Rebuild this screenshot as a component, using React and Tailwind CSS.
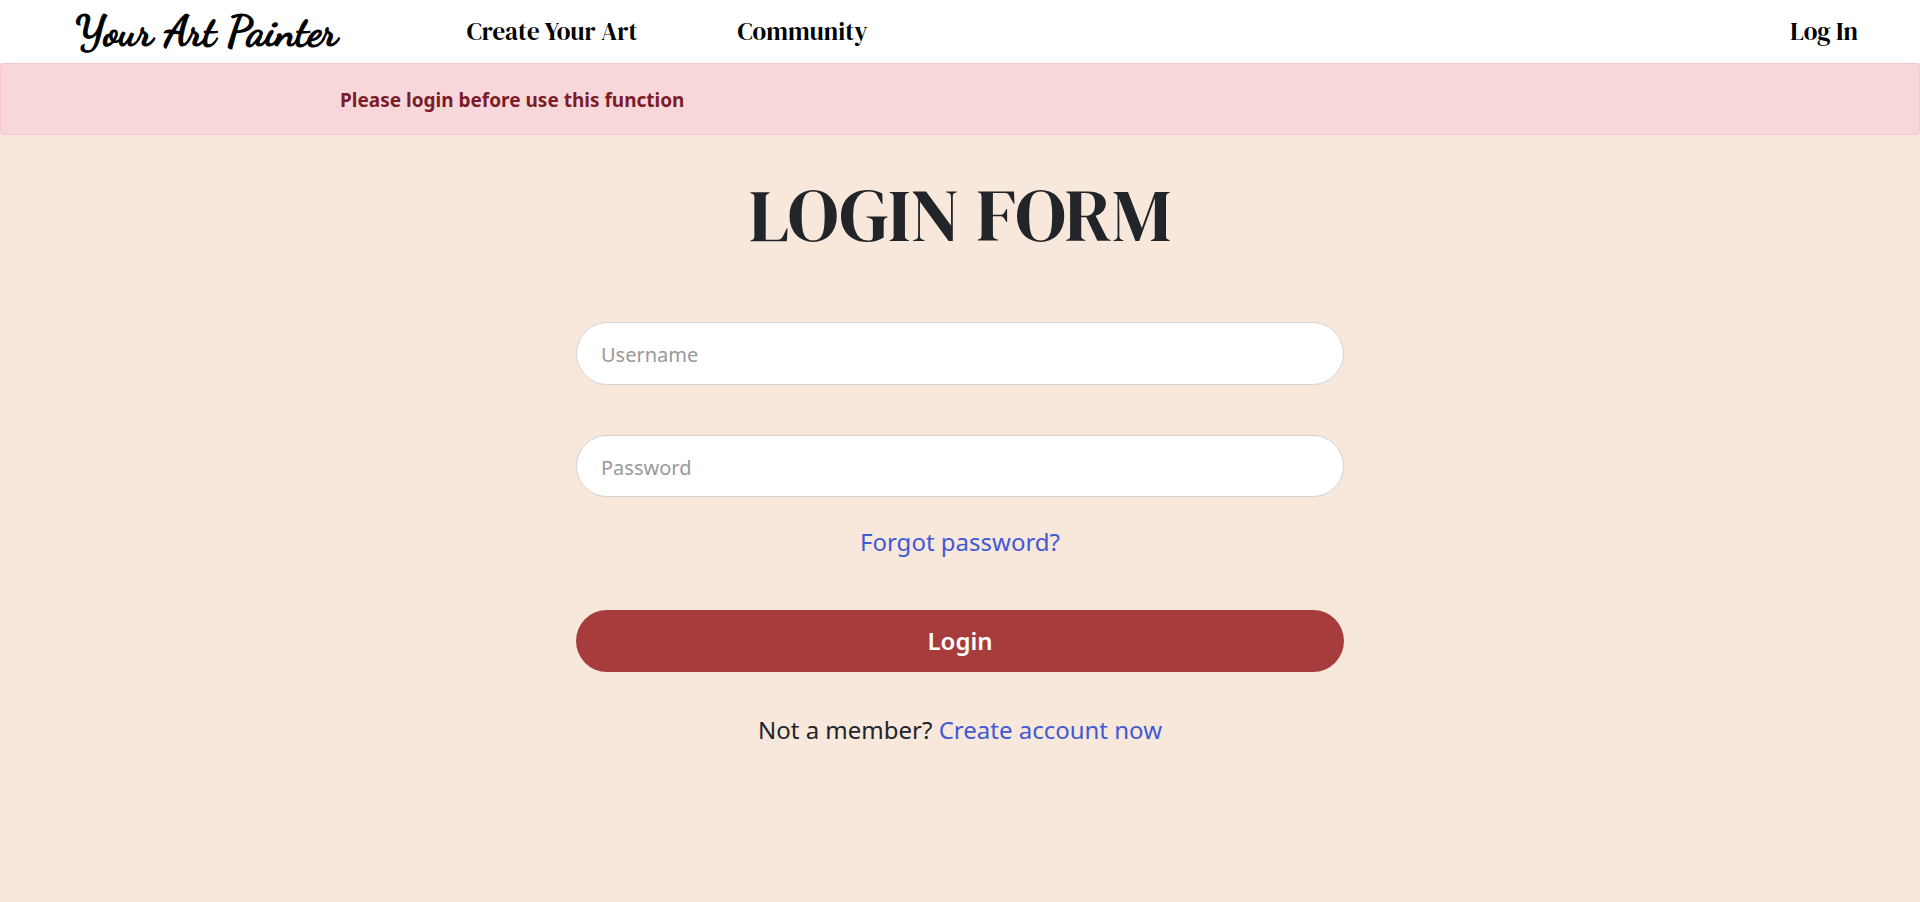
const navLink =
  "font-['DM_Serif_Display','Liberation_Serif',serif] text-[25px] leading-8 pb-0.5 font-normal text-black hover:opacity-70";
const field =
  "w-full rounded-full border border-[#d3d3d3] bg-white px-6 pt-0.5 text-[20px] text-[#212529] placeholder:text-[#999999]";
const textLink = "text-[#4259d4] hover:underline";

function Header() {
  return (
    <header className="flex h-[63px] items-center justify-between bg-white pr-[62px] pl-[75px]">
      <nav aria-label="Main" className="flex items-center">
        <a
          href="#home"
          className="mr-[129px] font-['Dancing_Script',cursive] text-[42px] leading-[48px] font-bold text-black [-webkit-text-stroke:1px_currentColor]"
        >
          Your Art Painter
        </a>
        <a href="#create" className={`${navLink} mr-[100px]`}>
          Create Your Art
        </a>
        <a href="#community" className={navLink}>
          Community
        </a>
      </nav>
      <a href="#login" className={navLink}>
        Log In
      </a>
    </header>
  );
}

function Alert({ children }) {
  return (
    <div
      role="alert"
      className="flex h-[72px] items-center rounded border border-[#f5c6cb] bg-[#f8d7da] pt-0.5 pl-[339px] text-[19px] leading-7 font-bold text-[#7b1c28]"
    >
      {children}
    </div>
  );
}

function LoginForm() {
  return (
    <form
      className="mt-[69px] flex w-2/5 flex-col"
      onSubmit={(event) => event.preventDefault()}
    >
      <input
        type="text"
        name="username"
        aria-label="Username"
        placeholder="Username"
        className={`${field} mb-[50px] h-[63px]`}
      />
      <input
        type="password"
        name="password"
        aria-label="Password"
        placeholder="Password"
        className={`${field} h-[62px]`}
      />
      <a href="#forgot" className={`${textLink} mt-[29px] self-center`}>
        Forgot password?
      </a>
      <button
        type="submit"
        className="mt-[52px] h-[62px] w-full cursor-pointer rounded-full bg-[#a63c3c] font-semibold text-white"
      >
        Login
      </button>
      <p className="mt-[42px] text-center">
        Not a member?{" "}
        <a href="#register" className={textLink}>
          Create account now
        </a>
      </p>
    </form>
  );
}

export default function App() {
  return (
    <div className="min-h-screen bg-[#f8e8db] font-['Segoe_UI','Noto_Sans',sans-serif] text-2xl text-[#212529]">
      <Header />
      <Alert>Please login before use this function</Alert>
      <main className="flex flex-col items-center pt-[42px] pb-16">
        <h1 className="font-['DM_Serif_Display','Liberation_Serif',serif] text-[75px] leading-[76px] font-normal">
          LOGIN FORM
        </h1>
        <LoginForm />
      </main>
    </div>
  );
}
